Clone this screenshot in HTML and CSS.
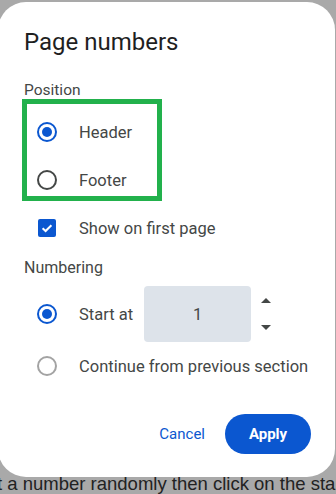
FILE: index.html
```html
<!DOCTYPE html>
<html lang="en">

<head>
    <meta charset="UTF-8">
    <meta name="viewport" content="width=device-width, initial-scale=1.0">
    <title>Page numbers</title>
    <link rel="stylesheet" href="styles.css">
</head>

<body>
    <div class="dialog">
        <h1 class="dialog-title">Page numbers</h1>

        <div class="section-label">Position</div>
        <div class="option-row">
            <span class="control"><span class="radio checked"></span></span>
            <span class="option-text">Header</span>
        </div>
        <div class="option-row">
            <span class="control"><span class="radio"></span></span>
            <span class="option-text">Footer</span>
        </div>
        <div class="option-row">
            <span class="control">
                <span class="checkbox">
                    <svg width="12" height="12" viewBox="0 0 12 12">
                        <path d="M1.6 6.2 L4.6 9 L10.4 3.2" fill="none" stroke="#fff" stroke-width="2"/>
                    </svg>
                </span>
            </span>
            <span class="option-text">Show on first page</span>
        </div>

        <div class="section-label numbering">Numbering</div>
        <div class="option-row start-row">
            <span class="control"><span class="radio checked"></span></span>
            <span class="option-text">Start at</span>
            <div class="number-field">1</div>
            <div class="spinner">
                <span class="arrow up"></span>
                <span class="arrow down"></span>
            </div>
        </div>
        <div class="option-row">
            <span class="control"><span class="radio disabled"></span></span>
            <span class="option-text">Continue from previous section</span>
        </div>

        <div class="actions">
            <button class="btn-text">Cancel</button>
            <button class="btn-filled">Apply</button>
        </div>

        <div class="highlight"></div>
    </div>
    <p class="behind-text">t a number randomly then click on the start</p>
</body>

</html>
```

FILE: styles.css
```css
body {
    margin: 0;
    padding-top: 2px;
    background-color: #a9a9a9;
    font-family: Roboto, "Noto Sans", sans-serif;
    overflow: hidden;
    height: 494px;
}

.dialog {
    position: relative;
    z-index: 1;
    width: 337px;
    margin-left: -2px;
    box-sizing: border-box;
    padding: 24px 24px 23px 26px;
    background-color: #fff;
    border-radius: 28px;
}

.dialog-title {
    margin: 0;
    font-size: 24px;
    font-weight: 400;
    line-height: 32px;
    color: #1f1f1f;
}

.section-label {
    margin-top: 22px;
    margin-bottom: 8px;
    font-size: 15.5px;
    line-height: 20px;
    color: #444746;
}

.section-label.numbering {
    margin-top: 6px;
    font-size: 16px;
}

.option-row {
    display: flex;
    align-items: center;
    height: 48px;
    padding-left: 3px;
}

.start-row {
    height: 56px;
}

.control {
    width: 40px;
    height: 40px;
    display: flex;
    align-items: center;
    justify-content: center;
}

.option-text {
    margin-left: 12px;
    font-size: 16.5px;
    color: #444746;
}

.radio {
    width: 16px;
    height: 16px;
    border: 2px solid #444746;
    border-radius: 50%;
    display: flex;
    align-items: center;
    justify-content: center;
}

.radio.checked {
    border-color: #0b57d0;
}

.radio.checked::after {
    content: "";
    width: 10px;
    height: 10px;
    border-radius: 50%;
    background-color: #0b57d0;
}

.radio.disabled {
    border-color: #a3a3a3;
}

.checkbox {
    width: 18px;
    height: 18px;
    border-radius: 2px;
    background-color: #0b57d0;
    display: flex;
    align-items: center;
    justify-content: center;
}

.number-field {
    width: 107px;
    height: 56px;
    margin-left: 11px;
    border-radius: 4px;
    background-color: #dde3ea;
    display: flex;
    align-items: center;
    justify-content: center;
    font-size: 16.5px;
    color: #444746;
}

.spinner {
    margin-left: 10px;
    height: 32px;
    display: flex;
    flex-direction: column;
    justify-content: space-between;
}

.arrow {
    width: 0;
    height: 0;
    border-left: 5px solid transparent;
    border-right: 5px solid transparent;
}

.arrow.up {
    border-bottom: 5px solid #444746;
}

.arrow.down {
    border-top: 5px solid #444746;
}

.actions {
    margin-top: 24px;
    display: flex;
    justify-content: flex-end;
    gap: 8px;
}

.btn-text,
.btn-filled {
    height: 40px;
    border: none;
    border-radius: 20px;
    font-family: Roboto, "Noto Sans", sans-serif;
    font-size: 15px;
    cursor: pointer;
}

.btn-text {
    padding: 0 12px;
    background: none;
    color: #0b57d0;
}

.btn-filled {
    width: 86px;
    background-color: #0b57d0;
    color: #fff;
    font-weight: 700;
}

.highlight {
    position: absolute;
    left: 24px;
    top: 97px;
    width: 130px;
    height: 92px;
    border: 5px solid #22b14c;
}

.behind-text {
    margin: -2px 0 0 -3px;
    white-space: nowrap;
    font-family: "Liberation Sans", Arial, sans-serif;
    font-size: 18.5px;
    line-height: 18px;
    color: #222;
}
```
